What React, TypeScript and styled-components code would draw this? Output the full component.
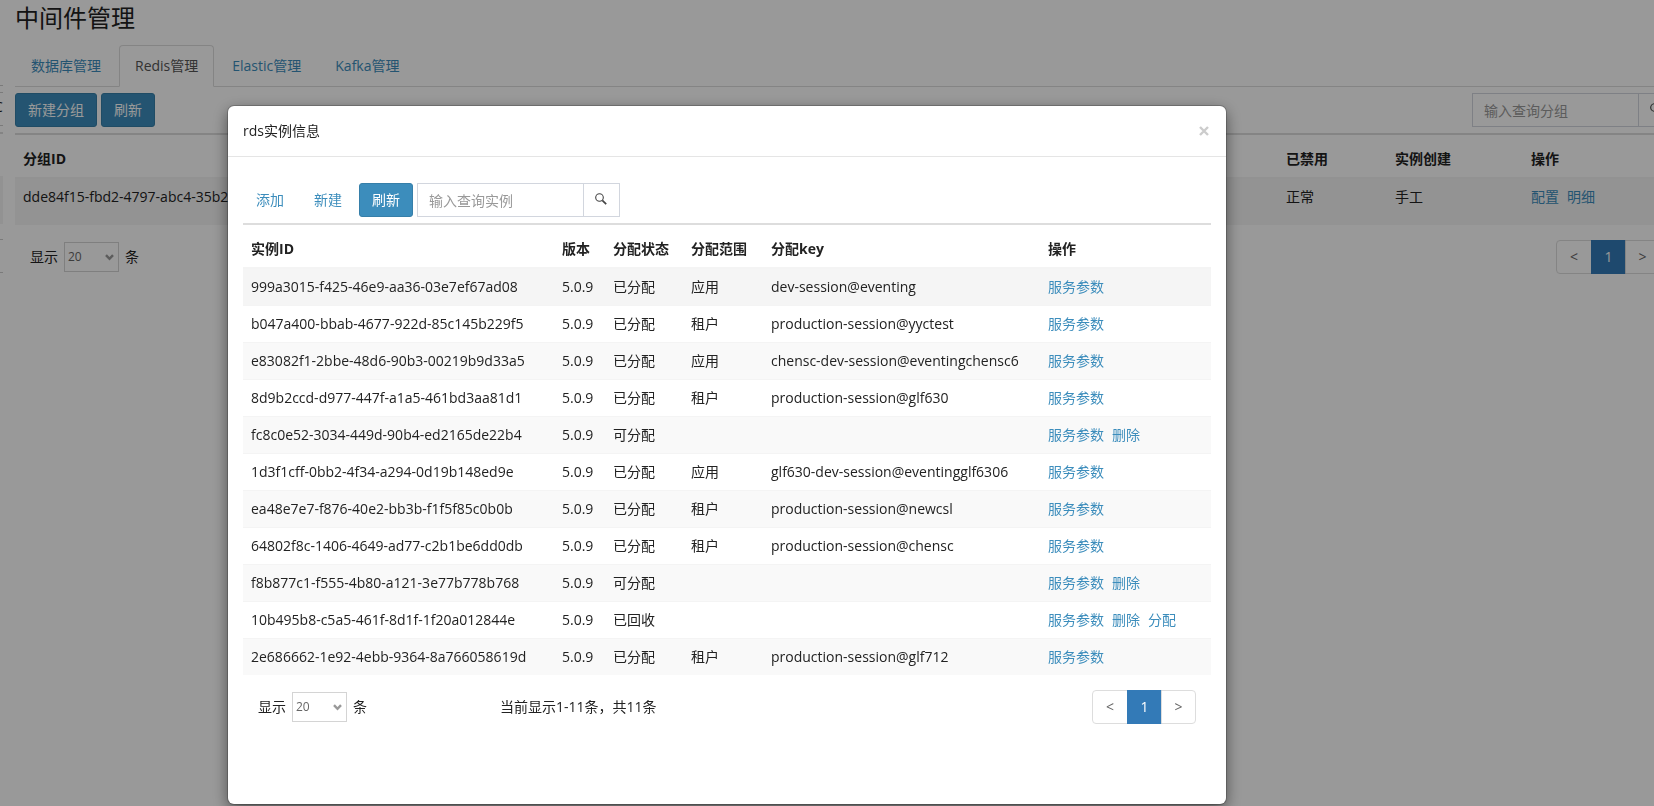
import React from 'react';
import styled, { createGlobalStyle, css } from 'styled-components';

const GlobalStyle = createGlobalStyle`
  *, *::before, *::after { box-sizing: border-box; }
  html, body, #root { height: 100%; }
  body {
    margin: 0;
    overflow: hidden;
    background: #fff;
    color: #222;
    font-family: "Open Sans", "Noto Sans CJK SC", sans-serif;
    font-size: 14px;
    line-height: 20px;
  }
  button, input, select { font: inherit; margin: 0; }
  a { color: #3c8dbc; text-decoration: none; }
`;

const Page = styled.div`
  display: flex;
  height: 100%;
  overflow: hidden;
`;

const Rail = styled.aside`
  flex: none;
  width: 3px;
  margin-right: 12px;
  padding-top: 85px;
  overflow: hidden;
`;

const RailBox = styled.div<{ $tall?: boolean }>`
  height: ${p => (p.$tall ? 33 : 7)}px;
  border-top: 1px solid #ccc;
  line-height: 28px;
  text-indent: -6px;
`;

const RailTable = styled.div`
  height: 107px;
  padding-top: 42px;
  border-top: 2px solid #ddd;
`;

const RailRow = styled.div`
  height: 48px;
  background: #f4f4f4;
`;

const Main = styled.main`
  flex: none;
  width: calc(100% + 6px);
`;

const PageTitle = styled.h1`
  margin: 0;
  height: 45px;
  font-size: 24px;
  font-weight: 400;
  line-height: 36px;
`;

const Tabs = styled.nav`
  display: flex;
  gap: 2px;
  height: 42px;
  border-bottom: 1px solid #ddd;
`;

const Tab = styled.a<{ $active?: boolean }>`
  height: 42px;
  padding: 10px 15px;
  border: 1px solid transparent;
  border-radius: 4px 4px 0 0;
  ${p => p.$active && css`
    color: #555;
    background: #fff;
    border-color: #ddd #ddd #fff;
  `}
`;

const Toolbar = styled.div`
  display: flex;
  gap: 4px;
  padding: 6px 0;
  border-bottom: 2px solid #ddd;
`;

const Button = styled.button<{ $link?: boolean }>`
  height: 34px;
  padding: 6px 12px;
  border: 1px solid ${p => (p.$link ? 'transparent' : '#367fa9')};
  border-radius: 3px;
  background: ${p => (p.$link ? 'transparent' : '#3c8dbc')};
  color: ${p => (p.$link ? '#3c8dbc' : '#fff')};
`;

const SearchGroup = styled.form<{ $end?: boolean }>`
  display: flex;
  margin: 0;
  ${p => p.$end && css`margin-left: auto;`}
`;

const SearchInput = styled.input`
  width: 167px;
  height: 34px;
  padding: 6px 11px;
  border: 1px solid #d2d6de;
  border-radius: 0;
  background: #fff;
  color: #555;
  &::placeholder { color: #999; opacity: 1; }
`;

const SearchButton = styled.button`
  display: flex;
  align-items: center;
  justify-content: center;
  width: 37px;
  height: 34px;
  margin-left: -1px;
  padding: 0 1px 2px 0;
  border: 1px solid #d2d6de;
  background: #fff;
  color: #444;
`;

const DataTable = styled.table`
  width: 100%;
  margin-top: 6px;
  border-collapse: separate;
  border-spacing: 0;
  table-layout: fixed;
  th, td {
    padding: 8px;
    text-align: left;
    vertical-align: top;
    white-space: nowrap;
  }
  th { border-bottom: 2px solid #f4f4f4; font-weight: 700; }
  tbody tr:nth-child(odd) { background: #f9f9f9; }
  tbody tr:first-child { background: #f5f5f5; }
  tbody tr + tr td { border-top: 1px solid #f4f4f4; }
`;

const GroupTable = styled(DataTable)`
  tbody td { padding-bottom: 18px; }
`;

const Col = styled.col<{ $w?: number }>`
  width: ${p => (p.$w ? `${p.$w}px` : 'auto')};
`;

const Actions = styled.div`
  display: flex;
  gap: 8px;
`;

const Footer = styled.footer`
  display: grid;
  grid-template-columns: 242px 1fr auto;
  align-items: center;
  padding: 15px 15px 0;
`;

const Sizer = styled.label`
  display: flex;
  align-items: center;
  gap: 6px;
`;

const SelectWrap = styled.span`
  display: grid;
  align-items: center;
  > * { grid-area: 1 / 1; }
  svg { justify-self: end; margin-right: 5px; pointer-events: none; }
`;

const Select = styled.select`
  appearance: none;
  width: 55px;
  height: 30px;
  padding: 0 3px;
  border: 1px solid #d4d4d4;
  border-radius: 0;
  background: #fff;
  color: #666;
  font-size: 12px;
`;

const Pages = styled.nav`
  display: flex;
`;

const PageButton = styled.button<{ $active?: boolean }>`
  width: 35px;
  height: 34px;
  padding: 0;
  margin-left: -1px;
  border: 1px solid ${p => (p.$active ? '#337ab7' : '#ddd')};
  background: ${p => (p.$active ? '#337ab7' : '#fff')};
  color: ${p => (p.$active ? '#fff' : '#666')};
  &:first-child { width: 36px; margin-left: 0; border-radius: 4px 0 0 4px; }
  &:last-child { border-radius: 0 4px 4px 0; }
`;

const Backdrop = styled.div`
  position: fixed;
  inset: 0;
  padding: 106px 428px 2px 228px;
  background: rgba(0, 0, 0, 0.4);
`;

const Dialog = styled.section`
  height: 100%;
  border-radius: 6px;
  background: #fff;
  box-shadow: 0 0 0 1px rgba(0, 0, 0, 0.2), 0 5px 15px rgba(0, 0, 0, 0.5);
`;

const DialogHeader = styled.header`
  display: flex;
  align-items: center;
  justify-content: space-between;
  height: 51px;
  padding: 0 16px 0 15px;
  border-bottom: 1px solid #e5e5e5;
`;

const DialogTitle = styled.h2`
  margin: 0;
  font-size: 14px;
  font-weight: 400;
`;

const Close = styled.button`
  display: flex;
  padding: 0;
  border: 0;
  background: none;
  color: #ccc;
`;

const DialogBody = styled.div`
  padding: 20px 15px;
`;

const SearchIcon = () => (
  <svg width="12" height="12" viewBox="0 0 12 12" fill="none" stroke="currentColor" aria-hidden="true">
    <circle cx="4.5" cy="4.5" r="3.8" strokeWidth="1.1" />
    <path d="M7.3 7.3 11.2 11.2" strokeWidth="1.7" />
  </svg>
);

const Chevron = () => (
  <svg width="9" height="7" viewBox="0 0 9 7" fill="none" stroke="#999" strokeWidth="2.4" aria-hidden="true">
    <path d="M1 1.2 4.5 4.8 8 1.2" />
  </svg>
);

const Search = ({ label, end }: { label: string; end?: boolean }) => (
  <SearchGroup $end={end} onSubmit={e => e.preventDefault()}>
    <SearchInput type="text" placeholder={label} aria-label={label} />
    <SearchButton type="submit" aria-label="查询"><SearchIcon /></SearchButton>
  </SearchGroup>
);

const TableFooter = ({ summary }: { summary?: string }) => (
  <Footer>
    <Sizer>
      显示
      <SelectWrap>
        <Select defaultValue="20">
          <option>20</option>
          <option>50</option>
        </Select>
        <Chevron />
      </SelectWrap>
      条
    </Sizer>
    <span>{summary}</span>
    <Pages>
      <PageButton type="button">&lt;</PageButton>
      <PageButton type="button" $active>1</PageButton>
      <PageButton type="button">&gt;</PageButton>
    </Pages>
  </Footer>
);

const tabs = ['数据库管理', 'Redis管理', 'Elastic管理', 'Kafka管理'];

type Instance = [id: string, status: string, scope: string, key: string, actions: string[]];

const base = ['服务参数'];
const instances: Instance[] = [
  ['999a3015-f425-46e9-aa36-03e7ef67ad08', '已分配', '应用', 'dev-session@eventing', base],
  ['b047a400-bbab-4677-922d-85c145b229f5', '已分配', '租户', 'production-session@yyctest', base],
  ['e83082f1-2bbe-48d6-90b3-00219b9d33a5', '已分配', '应用', 'chensc-dev-session@eventingchensc6', base],
  ['8d9b2ccd-d977-447f-a1a5-461bd3aa81d1', '已分配', '租户', 'production-session@glf630', base],
  ['fc8c0e52-3034-449d-90b4-ed2165de22b4', '可分配', '', '', [...base, '删除']],
  ['1d3f1cff-0bb2-4f34-a294-0d19b148ed9e', '已分配', '应用', 'glf630-dev-session@eventingglf6306', base],
  ['ea48e7e7-f876-40e2-bb3b-f1f5f85c0b0b', '已分配', '租户', 'production-session@newcsl', base],
  ['64802f8c-1406-4649-ad77-c2b1be6dd0db', '已分配', '租户', 'production-session@chensc', base],
  ['f8b877c1-f555-4b80-a121-3e77b778b768', '可分配', '', '', [...base, '删除']],
  ['10b495b8-c5a5-461f-8d1f-1f20a012844e', '已回收', '', '', [...base, '删除', '分配']],
  ['2e686662-1e92-4ebb-9364-8a766058619d', '已分配', '租户', 'production-session@glf712', base],
];

const Links = ({ items }: { items: string[] }) => (
  <Actions>{items.map(t => <a key={t} href="#">{t}</a>)}</Actions>
);

export default function App() {
  return (
    <>
      <GlobalStyle />
      <Page>
        <Rail>
          <RailBox />
          <RailBox $tall>C</RailBox>
          <RailBox />
          <RailTable><RailRow /></RailTable>
          <RailBox $tall />
          <RailBox />
        </Rail>
        <Main>
          <PageTitle>中间件管理</PageTitle>
          <Tabs>
            {tabs.map(t => <Tab key={t} href="#" $active={t === 'Redis管理'}>{t}</Tab>)}
          </Tabs>
          <Toolbar>
            <Button type="button">新建分组</Button>
            <Button type="button">刷新</Button>
            <Search label="输入查询分组" end />
          </Toolbar>
          <GroupTable>
            <colgroup>
              <Col />
              <Col $w={109} />
              <Col $w={136} />
              <Col $w={152} />
            </colgroup>
            <thead>
              <tr><th>分组ID</th><th>已禁用</th><th>实例创建</th><th>操作</th></tr>
            </thead>
            <tbody>
              <tr>
                <td>dde84f15-fbd2-4797-abc4-35b2</td>
                <td>正常</td>
                <td>手工</td>
                <td><Links items={['配置', '明细']} /></td>
              </tr>
            </tbody>
          </GroupTable>
          <TableFooter />
        </Main>
      </Page>
      <Backdrop>
        <Dialog role="dialog" aria-modal="true" aria-labelledby="dialog-title">
          <DialogHeader>
            <DialogTitle id="dialog-title">rds实例信息</DialogTitle>
            <Close type="button" aria-label="关闭">
              <svg width="12" height="10" viewBox="0 0 12 10" stroke="currentColor" strokeWidth="2.4">
                <path d="M2 1 10 9M10 1 2 9" />
              </svg>
            </Close>
          </DialogHeader>
          <DialogBody>
            <Toolbar>
              <Button type="button" $link>添加</Button>
              <Button type="button" $link>新建</Button>
              <Button type="button">刷新</Button>
              <Search label="输入查询实例" />
            </Toolbar>
            <DataTable>
              <colgroup>
                <Col />
                <Col $w={51} />
                <Col $w={78} />
                <Col $w={80} />
                <Col $w={277} />
                <Col $w={171} />
              </colgroup>
              <thead>
                <tr>
                  <th>实例ID</th><th>版本</th><th>分配状态</th><th>分配范围</th><th>分配key</th><th>操作</th>
                </tr>
              </thead>
              <tbody>
                {instances.map(([id, status, scope, key, actions]) => (
                  <tr key={id}>
                    <td>{id}</td>
                    <td>5.0.9</td>
                    <td>{status}</td>
                    <td>{scope}</td>
                    <td>{key}</td>
                    <td><Links items={actions} /></td>
                  </tr>
                ))}
              </tbody>
            </DataTable>
            <TableFooter summary="当前显示1-11条，共11条" />
          </DialogBody>
        </Dialog>
      </Backdrop>
    </>
  );
}
